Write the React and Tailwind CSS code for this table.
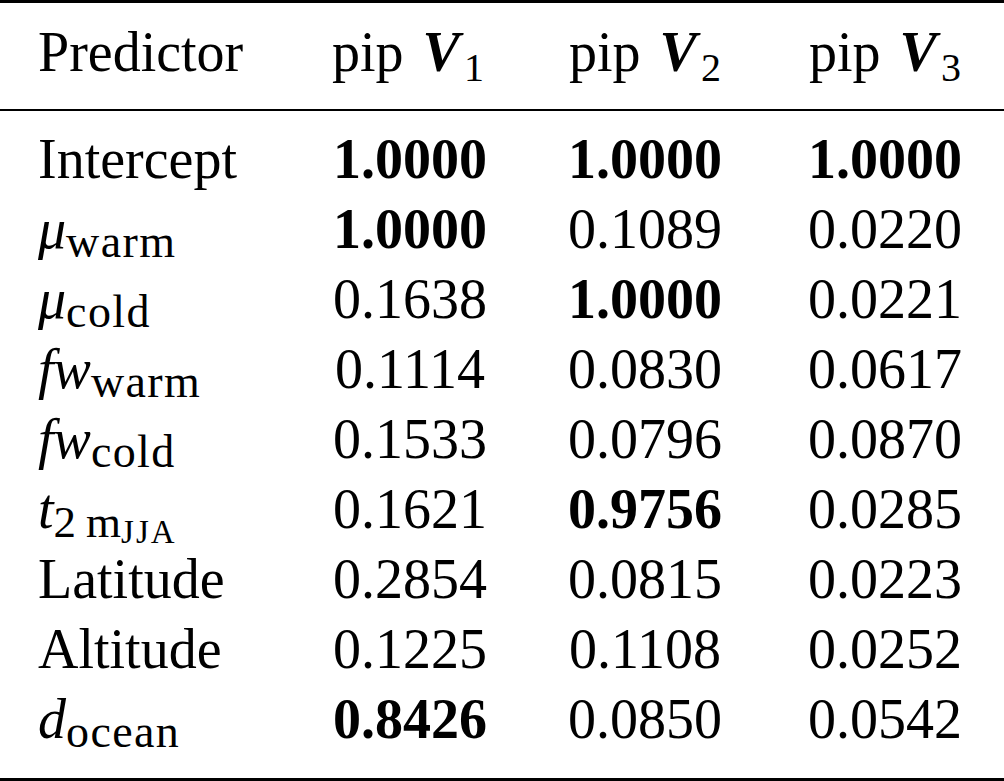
import React from 'react';

const rows = [
  { label: <span>Intercept</span>, v: ['1.0000', '1.0000', '1.0000'], bold: [true, true, true] },
  { label: <Sym base="μ" sub="warm" />, v: ['1.0000', '0.1089', '0.0220'], bold: [true, false, false] },
  { label: <Sym base="μ" sub="cold" />, v: ['0.1638', '1.0000', '0.0221'], bold: [false, true, false] },
  { label: <Sym base="fw" sub="warm" />, v: ['0.1114', '0.0830', '0.0617'], bold: [false, false, false] },
  { label: <Sym base="fw" sub="cold" />, v: ['0.1533', '0.0796', '0.0870'], bold: [false, false, false] },
  {
    label: (
      <span>
        <i>t</i>
        <span className="relative top-[9px] text-[45px] leading-[0]">
          2<span className="ml-[10px]">m</span>
          <span className="relative top-[6px] text-[33px] tracking-[0.06em]">JJA</span>
        </span>
      </span>
    ),
    v: ['0.1621', '0.9756', '0.0285'],
    bold: [false, true, false],
  },
  { label: <span>Latitude</span>, v: ['0.2854', '0.0815', '0.0223'], bold: [false, false, false] },
  { label: <span>Altitude</span>, v: ['0.1225', '0.1108', '0.0252'], bold: [false, false, false] },
  { label: <Sym base="d" sub="ocean" />, v: ['0.8426', '0.0850', '0.0542'], bold: [true, false, false] },
];

function Sym({ base, sub }) {
  return (
    <span>
      <i>{base}</i>
      <span className="relative top-[9px] text-[46px] leading-[0] tracking-[0.03em]">{sub}</span>
    </span>
  );
}

function Head({ n }) {
  return (
    <span>
      pip<b className="italic ml-[19px]">V</b>
      <span className="relative top-[10px] ml-[4px] text-[40px] leading-[0]">{n}</span>
    </span>
  );
}

const cols = 'grid grid-cols-[290px_240px_230px_244px]';

export default function App() {
  return (
    <div className="w-[1004px] h-[781px] overflow-hidden bg-white text-black text-[56px] leading-[70px] font-['Liberation_Serif','Times_New_Roman',serif]">
      <div className="border-t-[3px] border-black" />
      <div className={`${cols} pt-[14px] pb-[22px]`}>
        <div className="pl-[38px]">Predictor</div>
        <div className="text-center pr-[4px]">
          <Head n="1" />
        </div>
        <div className="text-center">
          <Head n="2" />
        </div>
        <div className="text-center pl-[6px]">
          <Head n="3" />
        </div>
      </div>
      <div className="border-t-2 border-black" />
      <div className="pt-[13px] pb-[24px]">
        {rows.map((r, i) => (
          <div key={i} className={`${cols} h-[70px]`}>
            <div className="pl-[38px] whitespace-nowrap">{r.label}</div>
            {r.v.map((val, j) => (
              <div key={j} className={`text-center ${j === 2 ? 'pl-[6px]' : ''} ${r.bold[j] ? 'font-bold' : ''}`}>
                {val}
              </div>
            ))}
          </div>
        ))}
      </div>
      <div className="border-t-[3px] border-black" />
    </div>
  );
}
